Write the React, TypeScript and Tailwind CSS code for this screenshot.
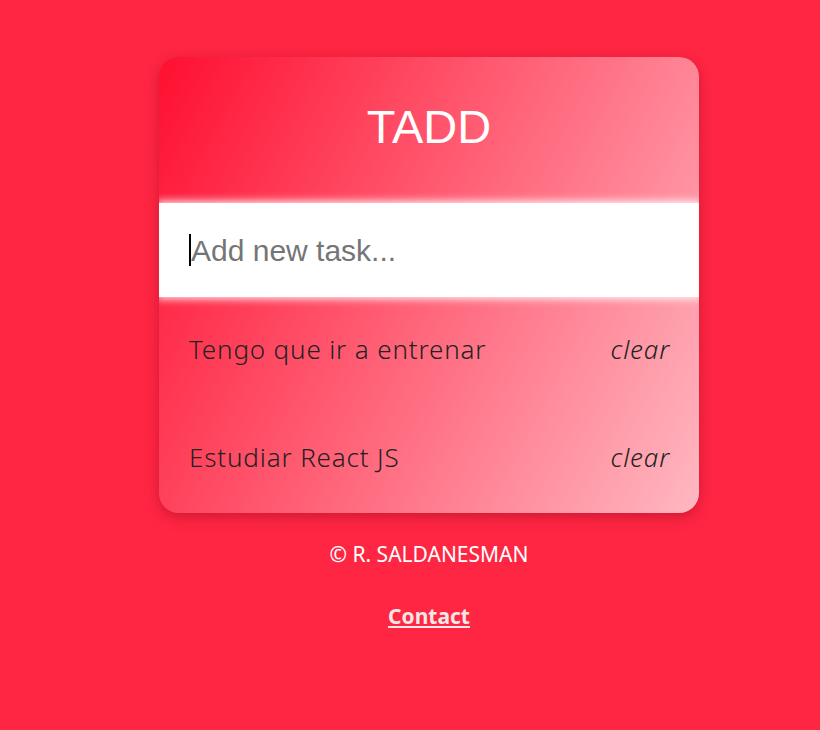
export default function App() {
  const tasks = ["Tengo que ir a entrenar", "Estudiar React JS"];
  return (
    <div className="min-h-[730px] w-full bg-[#ff2643] flex flex-col items-center pl-[38px] pt-[57px]" style={{ fontFamily: '"Noto Sans", sans-serif' }}>
      <div className="w-[540px] rounded-[20px] overflow-hidden bg-[linear-gradient(117deg,#ff0f30,#ffb8c2)] shadow-[0_4px_14px_rgba(120,0,20,0.35)]">
        <h1 className="h-[146px] flex items-center justify-center text-white text-[47px] font-['Liberation_Sans',sans-serif] pb-[6px]">
          TADD
        </h1>
        <div className="h-[94px] bg-white shadow-[0_0_8px_2px_rgba(255,255,255,0.9)] flex items-center px-[30px]">
          <span className="w-[2px] h-[32px] bg-black" />
          <input
            placeholder="Add new task..."
            className="w-full outline-none bg-transparent text-[30px] font-['Liberation_Sans',sans-serif] placeholder:text-[#757575] text-[#222]"
          />
        </div>
        <ul>
          {tasks.map((t) => (
            <li key={t} className="h-[108px] flex items-center justify-between pl-[30px] pr-[29px] pb-[4px] text-[#222] text-[26px] font-light tracking-[0.85px]">
              <span>{t}</span>
              <span className="italic">clear</span>
            </li>
          ))}
        </ul>
      </div>
      <p className="mt-[26px] text-white text-[21px]">© R. SALDANESMAN</p>
      <a href="#" className="mt-[30px] text-[#f3e6e6] text-[21px] font-bold underline">
        Contact
      </a>
    </div>
  );
}
